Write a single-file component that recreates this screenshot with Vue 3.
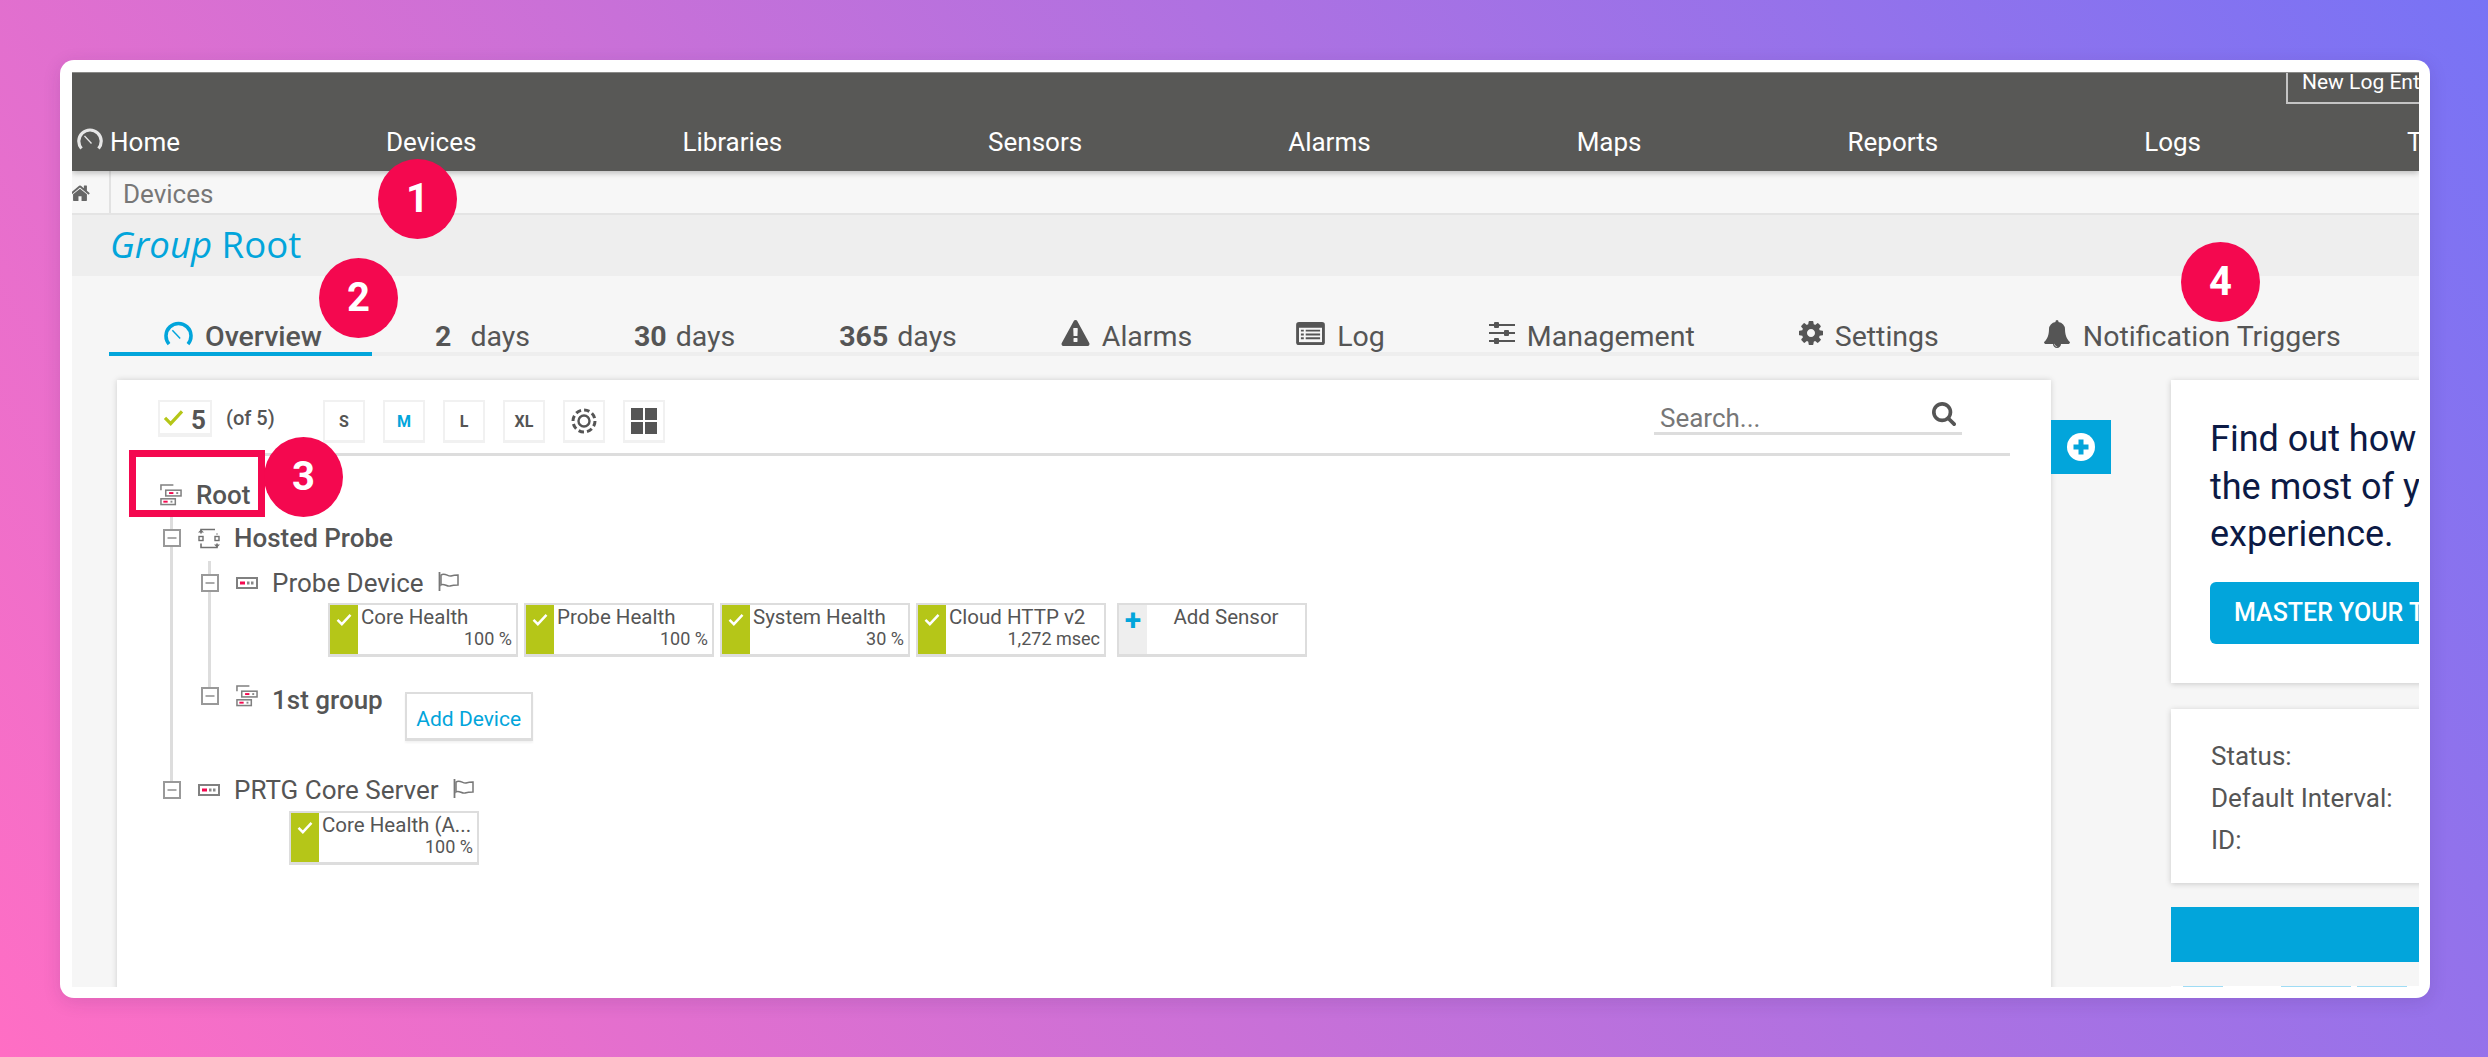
<script setup>
const navItems = ['Devices', 'Libraries', 'Sensors', 'Alarms', 'Maps', 'Reports', 'Logs', 'Tickets']
const tabs = [
  { icon: 'gauge', label: 'Overview', active: true },
  { strong: '2', label: 'days', wide: true },
  { strong: '30', label: 'days' },
  { strong: '365', label: 'days' },
  { icon: 'warn', label: 'Alarms' },
  { icon: 'log', label: 'Log' },
  { icon: 'sliders', label: 'Management' },
  { icon: 'cog', label: 'Settings' },
  { icon: 'bell', label: 'Notification Triggers' }
]
const sizes = [
  { label: 'S' },
  { label: 'M', active: true },
  { label: 'L' },
  { label: 'XL' }
]
const probeSensors = [
  { name: 'Core Health', value: '100 %' },
  { name: 'Probe Health', value: '100 %' },
  { name: 'System Health', value: '30 %' },
  { name: 'Cloud HTTP v2', value: '1,272 msec' }
]
const badges = [
  { n: 1, cls: 'b1' },
  { n: 2, cls: 'b2' },
  { n: 3, cls: 'b3' },
  { n: 4, cls: 'b4' }
]
</script>

<template>
  <div class="page">
    <svg class="defs" width="0" height="0" aria-hidden="true">
      <symbol id="gauge" viewBox="0 0 26 22">
        <path d="M4.5 20.5A11.2 11.2 0 1 1 21.5 20.5" fill="none" stroke="currentColor" stroke-width="3.2" />
        <path d="M7.5 8l7 7.5" fill="none" stroke="currentColor" stroke-width="1.3" />
      </symbol>
      <symbol id="warn" viewBox="0 0 1792 1792">
        <path fill="currentColor" d="M1024 1375v-190q0-14-9.5-23.5T992 1152H800q-13 0-22.5 9.5T768 1185v190q0 14 9.5 23.5t22.5 9.5h192q13 0 22.5-9.5t9.5-23.5zm-2-374l18-459q0-12-10-19-13-11-24-11H786q-11 0-24 11-10 7-10 21l17 457q0 10 10 16.5t24 6.5h185q14 0 23.5-6.5t10.5-16.5zm-14-934l768 1408q35 63-2 126-17 29-46.5 46t-63.5 17H128q-34 0-63.5-17T18 1601q-37-63-2-126L784 67q17-31 47-49t65-18 65 18 47 49z" />
      </symbol>
      <symbol id="log" viewBox="0 0 30 24">
        <rect x="0" y="0" width="30" height="24" rx="3" fill="currentColor" />
        <rect x="3" y="6" width="24" height="15" fill="#f6f6f6" />
        <path d="M5 9h3M10 9h15M5 13h3M10 13h15M5 17h3M10 17h15" stroke="currentColor" stroke-width="2" />
      </symbol>
      <symbol id="sliders" viewBox="0 0 26 24">
        <path d="M0 4h26M0 12h26M0 20h26" stroke="currentColor" stroke-width="2" />
        <rect x="5" y="1" width="5" height="6" rx="1" fill="currentColor" />
        <rect x="15" y="9" width="5" height="6" rx="1" fill="currentColor" />
        <rect x="5" y="17" width="5" height="6" rx="1" fill="currentColor" />
      </symbol>
      <symbol id="cog" viewBox="128 128 1536 1536">
        <path fill="currentColor" d="M1152 896q0-106-75-181t-181-75-181 75-75 181 75 181 181 75 181-75 75-181zm512-109v222q0 12-8 23t-20 13l-185 28q-19 54-39 91 35 50 107 138 10 12 10 25t-9 23q-27 37-99 108t-94 71q-12 0-26-9l-138-108q-44 23-91 38-16 136-29 186-7 28-36 28H785q-14 0-24.5-8.5T749 1634l-28-184q-49-16-90-37l-141 107q-10 9-25 9-14 0-25-11-126-114-165-168-7-10-7-23 0-12 8-23 15-21 51-66.5t54-70.5q-27-50-41-99l-183-27q-13-2-21-12.5T128 1005V783q0-12 8-23t19-13l186-28q14-46 39-92-40-57-107-138-10-12-10-24 0-10 9-23 26-36 98.5-107.5T465 263q13 0 26 10l138 107q44-23 91-38 16-136 29-186 7-28 36-28h222q14 0 24.5 8.5T1043 158l28 184q49 16 90 37l142-107q9-9 24-9 13 0 25 10 129 119 165 170 7 8 7 22 0 12-8 23-15 21-51 66.5t-54 70.5q26 50 41 98l183 28q13 2 21 12.5t8 23.5z" />
      </symbol>
      <symbol id="bell" viewBox="64 0 1664 1792">
        <path fill="currentColor" d="M912 1696q0-16-16-16-59 0-101.5-42.5T752 1536q0-16-16-16t-16 16q0 73 51.5 124.5T896 1712q16 0 16-16zm816-288q0 52-38 90t-90 38h-448q0 106-75 181t-181 75-181-75-75-181H192q-52 0-90-38t-38-90q50-42 91-88t85-119.5 74.5-158.5 50-206T384 576q0-152 117-282.5T808 135q-8-19-8-39 0-40 28-68t68-28 68 28 28 68q0 20-8 39 190 28 307 158.5T1408 576q0 139 19.5 260t50 206 74.5 158.5 85 119.5 91 88z" />
      </symbol>
      <symbol id="home" viewBox="64 128 1664 1408">
        <path fill="currentColor" d="M1472 992v480q0 26-19 45t-45 19h-384v-384H768v384H384q-26 0-45-19t-19-45V992q0-1 .5-3t.5-3l575-474 575 474q1 2 1 6zm223-69l-62 74q-8 9-21 11h-3q-13 0-21-7L896 424l-692 577q-12 8-24 7-13-2-21-11l-62-74q-8-10-7-23.5t11-21.5l719-599q32-26 76-26t76 26l244 204V288q0-14 9-23t23-9h192q14 0 23 9t9 23v408l219 182q10 8 11 21.5t-7 23.5z" />
      </symbol>
      <symbol id="search" viewBox="64 128 1664 1664">
        <path fill="currentColor" d="M1216 832q0-185-131.5-316.5T768 384 451.5 515.5 320 832t131.5 316.5T768 1280t316.5-131.5T1216 832zm512 832q0 52-38 90t-90 38q-54 0-90-38l-343-342q-179 124-399 124-143 0-273.5-55.5t-225-150-150-225T64 832t55.5-273.5 150-225 225-150T768 128t273.5 55.5 225 150 150 225T1472 832q0 220-124 399l343 343q37 37 37 90z" />
      </symbol>
      <symbol id="check" viewBox="0 0 22 18">
        <path d="M2 9.5l6 6L20 2.5" fill="none" stroke="currentColor" stroke-width="3.4" />
      </symbol>
      <symbol id="minus" viewBox="0 0 18 18">
        <rect x="1" y="1" width="16" height="16" fill="#fff" stroke="#999" stroke-width="2" />
        <path d="M4.5 9h9" stroke="#aaa" stroke-width="2" />
      </symbol>
      <symbol id="device" viewBox="0 0 22 12">
        <rect x="1" y="1" width="20" height="10" fill="#fff" stroke="#808080" stroke-width="2" />
        <rect x="4" y="4.5" width="5" height="3" fill="#f4084f" />
        <rect x="11" y="4.5" width="2.5" height="3" fill="#888" />
        <rect x="15" y="4.5" width="2.5" height="3" fill="#888" />
      </symbol>
      <symbol id="group" viewBox="0 0 23 23">
        <path d="M1 7V1.5h13" fill="none" stroke="#808080" stroke-width="1.6" />
        <rect x="6" y="7" width="16" height="6" fill="#fff" stroke="#808080" stroke-width="1.6" />
        <rect x="9.5" y="9" width="4.5" height="2" fill="#f4084f" />
        <rect x="17" y="9" width="2" height="2" fill="#888" />
        <rect x="1" y="16" width="15" height="6" fill="#fff" stroke="#808080" stroke-width="1.6" />
        <rect x="3.5" y="18" width="4.5" height="2" fill="#f4084f" />
        <rect x="11" y="18" width="2" height="2" fill="#888" />
      </symbol>
      <symbol id="probe" viewBox="0 0 22 22">
        <path d="M3 6V2h14M19 7v-1M3 16v4h16v-4" fill="none" stroke="#707070" stroke-width="1.6" />
        <path d="M0 5l3-3 3 3M16 17l3 3 3-3" fill="#707070" />
        <rect x="1" y="9" width="4" height="4" fill="#fff" stroke="#707070" stroke-width="1.4" />
        <rect x="17" y="9" width="4" height="4" fill="#fff" stroke="#707070" stroke-width="1.4" />
      </symbol>
      <symbol id="flag" viewBox="0 0 22 19">
        <path d="M1.5 0v19" stroke="#777" stroke-width="1.8" />
        <path d="M3 3c4-3 7 2 10 1s5-1 7-1v10c-3 0-5 0-8 1s-6-3-9-1z" fill="none" stroke="#777" stroke-width="1.5" />
      </symbol>
    </svg>

    <div class="window">
      <div class="screen">
        <header class="nav">
          <div class="nav-top">
            <span class="new-log">New Log Entry</span>
          </div>
          <nav class="nav-links">
            <span class="nav-link nav-home">
              <svg class="nav-gauge"><use href="#gauge" /></svg>Home
            </span>
            <span v-for="item in navItems" :key="item" class="nav-link">{{ item }}</span>
          </nav>
        </header>

        <div class="crumbs">
          <svg class="crumb-home"><use href="#home" /></svg>
          <span class="crumb-text">Devices</span>
        </div>

        <div class="title-band">
          <h1 class="title"><em>Group</em> Root</h1>
        </div>

        <div class="tabs">
          <div
            v-for="tab in tabs"
            :key="tab.label + (tab.strong || '')"
            class="tab"
            :class="{ 'tab-active': tab.active }"
          >
            <svg v-if="tab.icon" class="tab-icon" :class="'ti-' + tab.icon"><use :href="'#' + tab.icon" /></svg>
            <b v-if="tab.strong" class="tab-strong" :class="{ 'tab-strong-wide': tab.wide }">{{ tab.strong }}</b>
            <span>{{ tab.label }}</span>
          </div>
        </div>

        <div class="content">
          <section class="panel">
            <div class="toolbar">
              <div class="count">
                <svg class="count-check"><use href="#check" /></svg>
                <b>5</b>
              </div>
              <span class="count-of">(of 5)</span>
              <div class="tools">
                <span
                  v-for="s in sizes"
                  :key="s.label"
                  class="tool"
                  :class="{ 'tool-active': s.active }"
                >{{ s.label }}</span>
                <span class="tool">
                  <svg class="tool-svg" viewBox="0 0 26 26">
                    <circle cx="13" cy="13" r="11" fill="none" stroke="#555" stroke-width="3" stroke-dasharray="5.5 3.1" />
                    <circle cx="13" cy="13" r="5.5" fill="none" stroke="#555" stroke-width="2.4" />
                  </svg>
                </span>
                <span class="tool">
                  <svg class="tool-svg" viewBox="0 0 26 26">
                    <rect x="0" y="0" width="12" height="12" fill="#555" />
                    <rect x="14" y="0" width="12" height="12" fill="#555" />
                    <rect x="0" y="14" width="12" height="12" fill="#555" />
                    <rect x="14" y="14" width="12" height="12" fill="#555" />
                  </svg>
                </span>
              </div>
              <div class="search">
                <span>Search...</span>
                <svg class="search-icon"><use href="#search" /></svg>
              </div>
            </div>

            <div class="tree">
              <div class="root-row">
                <svg class="i-group"><use href="#group" /></svg>
                <span class="node-bold">Root</span>
              </div>
              <div class="root-children">
                <div class="row row-hosted">
                  <svg class="i-minus"><use href="#minus" /></svg>
                  <svg class="i-group"><use href="#probe" /></svg>
                  <span class="node-bold">Hosted Probe</span>
                </div>
                <div class="hosted-children">
                  <div class="row row-probe-device">
                    <svg class="i-minus"><use href="#minus" /></svg>
                    <svg class="i-device"><use href="#device" /></svg>
                    <span class="node">Probe Device</span>
                    <svg class="i-flag"><use href="#flag" /></svg>
                  </div>
                  <div class="sensors">
                    <div v-for="s in probeSensors" :key="s.name" class="sensor">
                      <span class="sensor-state"><svg class="sensor-check"><use href="#check" /></svg></span>
                      <div class="sensor-body">
                        <div class="sensor-name">{{ s.name }}</div>
                        <div class="sensor-value">{{ s.value }}</div>
                      </div>
                    </div>
                    <div class="sensor sensor-add">
                      <span class="sensor-plus">+</span>
                      <div class="sensor-add-text">Add Sensor</div>
                    </div>
                  </div>
                  <div class="row row-group">
                    <svg class="i-minus"><use href="#minus" /></svg>
                    <svg class="i-group"><use href="#group" /></svg>
                    <span class="node-bold">1st group</span>
                    <span class="add-device">Add Device</span>
                  </div>
                </div>
                <div class="row row-core">
                  <svg class="i-minus"><use href="#minus" /></svg>
                  <svg class="i-device"><use href="#device" /></svg>
                  <span class="node">PRTG Core Server</span>
                  <svg class="i-flag"><use href="#flag" /></svg>
                </div>
                <div class="sensors sensors-core">
                  <div class="sensor">
                    <span class="sensor-state"><svg class="sensor-check"><use href="#check" /></svg></span>
                    <div class="sensor-body">
                      <div class="sensor-name">Core Health (A...</div>
                      <div class="sensor-value">100 %</div>
                    </div>
                  </div>
                </div>
              </div>
            </div>
          </section>

          <div class="plus-tab">
            <svg class="plus-svg" viewBox="0 0 28 28">
              <circle cx="14" cy="14" r="14" fill="#fff" />
              <path d="M14 6.5v15M6.5 14h15" stroke="#02a5db" stroke-width="5" />
            </svg>
          </div>

          <aside class="side">
            <div class="card promo">
              <p class="promo-text">Find out how to get<br />the most of your<br />experience.</p>
              <div class="promo-btn">MASTER YOUR TRIAL</div>
            </div>
            <div class="card info">
              <div>Status:</div>
              <div>Default Interval:</div>
              <div>ID:</div>
            </div>
            <div class="blue-bar"></div>
            <div class="strip">
              <i class="strip-a"></i><i class="strip-b"></i><i class="strip-c"></i>
            </div>
          </aside>
        </div>
      </div>
    </div>

    <div class="red-box"></div>
    <span v-for="b in badges" :key="b.n" class="badge" :class="b.cls">{{ b.n }}</span>
  </div>
</template>

<style>
html, body { margin: 0; padding: 0; }
</style>

<style scoped>
.page {
  position: relative;
  width: 2488px;
  height: 1057px;
  box-sizing: border-box;
  padding: 60px 58px 59px 60px;
  overflow: hidden;
  background: linear-gradient(57deg, #ff6ec4 0%, #7873f5 100%);
  font-family: Roboto, "Liberation Sans", sans-serif;
  color: #555;
}
.defs { position: absolute; }
.window {
  height: 100%;
  box-sizing: border-box;
  padding: 12px 11px 11px 12px;
  background: #fff;
  border-radius: 14px;
  box-shadow: 0 4px 18px rgba(60, 30, 90, 0.14);
}
.screen {
  height: 100%;
  overflow: hidden;
  background: #f6f6f6;
}
.nav {
  height: 99px;
  box-sizing: border-box;
  background: #585856;
  border-top: 1px solid #8a8a88;
  box-shadow: 0 2px 6px rgba(0, 0, 0, 0.25);
  position: relative;
}
.nav-top {
  height: 31px;
  display: flex;
  justify-content: flex-end;
}
.new-log {
  box-sizing: border-box;
  width: 160px;
  margin-right: -27px;
  height: 31px;
  padding-left: 14px;
  border-left: 2px solid #c4c4c4;
  border-bottom: 2px solid #c4c4c4;
  color: #fff;
  font-size: 21px;
  line-height: 19px;
  white-space: nowrap;
}
.nav-links {
  display: flex;
  gap: 206px;
  margin-top: 23px;
  padding-left: 5px;
  white-space: nowrap;
}
.nav-link {
  color: #fff;
  font-size: 26px;
  line-height: 30px;
}
.nav-home { display: flex; align-items: center; }
.nav-gauge { width: 26px; height: 22px; margin: -6px 7px 0 0; color: #e6e6e6; }
.crumbs {
  height: 44px;
  box-sizing: border-box;
  display: flex;
  background: #f7f7f7;
  border-bottom: 2px solid #e4e4e4;
}
.crumb-home {
  width: 20px;
  height: 19px;
  color: #666;
  margin: 12px 0 0 -2px;
}
.crumb-text {
  margin-left: 19px;
  padding-left: 12px;
  border-left: 2px solid #e2e2e2;
  color: #777;
  font-size: 26px;
  line-height: 46px;
  height: 42px;
}
.title-band {
  height: 61px;
  background: #eee;
  padding-left: 38px;
}
.title {
  margin: 0;
  font-family: "Open Sans", sans-serif;
  font-weight: 400;
  font-size: 36.6px;
  line-height: 58px;
  color: #02a5db;
}
.title em { font-style: italic; }
.tabs {
  display: flex;
  margin-left: 37px;
  padding-top: 46px;
  border-bottom: 4px solid #eee;
  white-space: nowrap;
}
.tab {
  display: flex;
  align-items: center;
  padding: 0 52px;
  font-size: 28.5px;
  line-height: 34px;
  height: 30px;
  color: #555;
}
.tab-active {
  padding: 0 50px 0 55px;
  height: 30px;
  margin-right: 11px;
  margin-bottom: -4px;
  border-bottom: 4px solid #02a5db;
  font-weight: 500;
}
.tab-strong { font-weight: 700; margin-right: 9px; }
.tab-strong-wide { margin-right: 19px; }
.tab-icon { margin-right: 12px; margin-top: -8px; }
.ti-gauge { width: 29px; height: 25px; color: #02a5db; }
.ti-warn { width: 29px; height: 28px; margin-top: -6px; }
.ti-log { width: 29px; height: 23px; }
.ti-sliders { width: 26px; height: 24px; }
.ti-cog { width: 24px; height: 24px; }
.ti-bell { width: 28px; height: 28px; margin-top: -6px; }

.content {
  display: flex;
  align-items: flex-start;
  margin: 24px 0 0 45px;
  height: 640px;
}
.panel {
  flex: none;
  width: 1934px;
  height: 640px;
  box-sizing: border-box;
  padding: 20px 41px 0 23px;
  background: #fff;
  box-shadow: 0 0 6px rgba(0, 0, 0, 0.16);
}
.toolbar {
  display: flex;
  align-items: flex-start;
  height: 56px;
  box-sizing: border-box;
  border-bottom: 3px solid #ddd;
}
.count {
  width: 54px;
  height: 37px;
  margin-left: 18px;
  box-sizing: border-box;
  display: flex;
  align-items: center;
  border: 2px solid #f1f1f1;
  border-bottom-width: 4px;
  font-size: 26px;
}
.count b { font-weight: 700; margin-left: 7px; margin-top: 4px; }
.count-check { width: 21px; height: 17px; margin-left: 3px; color: #b5c618; }
.count-of {
  width: 97px;
  margin-left: 14px;
  font-size: 20px;
  font-weight: 500;
  line-height: 36px;
}
.tools { display: flex; gap: 18px; }
.tool {
  width: 42px;
  height: 43px;
  box-sizing: border-box;
  display: flex;
  align-items: center;
  justify-content: center;
  border: 2px solid #f1f1f1;
  border-bottom-width: 3px;
  font-size: 16px;
  font-weight: 700;
  color: #555;
}
.tool-active { color: #02a5db; }
.tool-svg { width: 26px; height: 26px; }
.search {
  margin-left: auto;
  margin-right: 48px;
  width: 308px;
  height: 35px;
  box-sizing: border-box;
  display: flex;
  justify-content: space-between;
  padding: 0 6px;
  border-bottom: 3px solid #ddd;
  color: #777;
  font-size: 26px;
  line-height: 36px;
}
.search-icon { width: 24px; height: 24px; margin-top: 2px; color: #555; }

.tree { padding-top: 24px; }
.root-row {
  height: 30px;
  display: flex;
  align-items: center;
  margin-left: 20px;
}
.root-row .i-group { margin: -2px 14px 0 0; }
.node-bold { font-size: 26px; font-weight: 500; line-height: 30px; white-space: nowrap; }
.node { font-size: 26px; line-height: 30px; white-space: nowrap; }
.i-group { width: 22px; height: 23px; flex: none; }
.i-minus { width: 18px; height: 18px; margin-right: 17px; flex: none; position: relative; z-index: 1; }
.i-device { width: 22px; height: 12px; margin-right: 14px; flex: none; }
.i-flag { width: 22px; height: 19px; margin: -4px 0 0 14px; flex: none; }
.row { display: flex; align-items: center; height: 30px; }
.row > .i-group { margin-right: 14px; }

.root-children { position: relative; margin-left: 23px; }
.root-children::before {
  content: "";
  position: absolute;
  left: 7px;
  top: -7px;
  bottom: 84px;
  width: 3px;
  background: #ddd;
}
.row-hosted { margin-top: 13px; }
.hosted-children { position: relative; margin-left: 38px; }
.hosted-children::before {
  content: "";
  position: absolute;
  left: 7px;
  top: -7px;
  bottom: 54px;
  width: 3px;
  background: #ddd;
}
.row-probe-device { margin-top: 15px; }
.sensors { display: flex; gap: 6px; margin: 5px 0 0 127px; }
.sensors-core { margin: 6px 0 0 126px; }
.sensor {
  width: 190px;
  height: 54px;
  box-sizing: border-box;
  display: flex;
  flex: none;
  border: 2px solid #ddd;
  border-bottom-width: 3px;
  background: #fff;
}
.sensor-state {
  width: 28px;
  flex: none;
  background: #b5c618;
  display: flex;
  justify-content: center;
  align-items: flex-start;
}
.sensor-check { width: 16px; height: 13px; margin-top: 8px; color: #fff; }
.sensor-body {
  flex: 1;
  min-width: 0;
  padding: 2px 4px 0 3px;
  font-size: 20.5px;
  line-height: 21px;
  color: #555;
  white-space: nowrap;
}
.sensor-value { text-align: right; font-size: 18px; }
.sensor-add { margin-left: 5px; }
.sensor-plus {
  width: 28px;
  flex: none;
  background: #eee;
  color: #02a5db;
  font-size: 30px;
  font-weight: 700;
  line-height: 30px;
  text-align: center;
}
.sensor-add-text {
  flex: 1;
  text-align: center;
  font-size: 20.5px;
  line-height: 24px;
  color: #555;
}
.row-group {
  margin-top: 27px;
  height: 57px;
  align-items: flex-start;
}
.row-group .i-minus { margin-top: 3px; }
.row-group .node-bold { margin-top: 1px; }
.add-device {
  margin: 8px 0 0 22px;
  width: 128px;
  height: 49px;
  box-sizing: border-box;
  border: 2px solid #ddd;
  border-bottom-width: 3px;
  text-align: center;
  color: #02a5db;
  font-size: 21px;
  line-height: 50px;
  background: #fff;
  box-shadow: 0 2px 2px rgba(0, 0, 0, 0.05);
}
.row-core { margin-top: 34px; }

.plus-tab {
  flex: none;
  width: 60px;
  height: 54px;
  margin-top: 40px;
  background: #02a5db;
  display: flex;
  align-items: center;
  justify-content: center;
}
.plus-svg { width: 28px; height: 28px; }
.side {
  flex: none;
  width: 400px;
  margin-left: 60px;
}
.card {
  background: #fff;
  box-shadow: 0 1px 6px rgba(0, 0, 0, 0.18);
  box-sizing: border-box;
}
.promo { height: 303px; padding: 36px 0 0 39px; }
.promo-text {
  margin: 0;
  font-family: Roboto, sans-serif;
  font-size: 36px;
  line-height: 47.5px;
  color: #0c1a45;
  white-space: nowrap;
}
.promo-btn {
  margin-top: 23px;
  height: 62px;
  padding-left: 24px;
  border-radius: 6px;
  background: #02a5db;
  color: #fff;
  font-weight: 500;
  font-size: 25px;
  line-height: 62px;
  white-space: nowrap;
}
.info {
  margin-top: 26px;
  height: 174px;
  padding: 26px 0 0 40px;
  font-size: 26px;
  line-height: 42px;
  color: #555;
}
.blue-bar { margin-top: 24px; height: 55px; background: #02a5db; }
.strip {
  display: flex;
  height: 4px;
  margin-top: 24px;
  background: #fff;
}
.strip i { display: block; height: 4px; background: #9fdcf5; }
.strip-a { width: 40px; margin-left: 12px; }
.strip-b { width: 70px; margin-left: 58px; }
.strip-c { width: 50px; margin-left: 6px; }

.red-box {
  position: absolute;
  left: 129px;
  top: 450px;
  width: 136px;
  height: 67px;
  box-sizing: border-box;
  border: 7px solid #f4084f;
}
.badge {
  position: absolute;
  width: 79px;
  height: 80px;
  border-radius: 50%;
  background: #f4084f;
  color: #fff;
  font-family: Roboto, sans-serif;
  font-weight: 700;
  font-size: 40px;
  line-height: 80px;
  text-align: center;
}
.b1 { left: 378px; top: 159px; }
.b2 { left: 319px; top: 258px; }
.b3 { left: 264px; top: 437px; }
.b4 { left: 2181px; top: 242px; }
</style>
